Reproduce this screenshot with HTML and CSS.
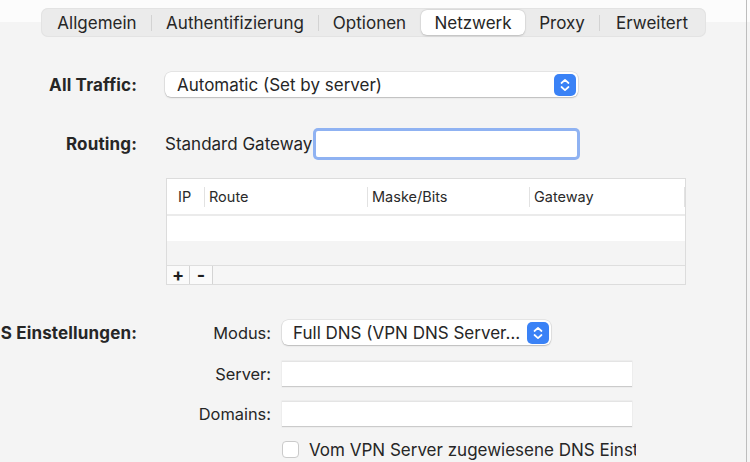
FILE: index.html
```html
<!DOCTYPE html>
<html lang="de">
<head>
<meta charset="utf-8">
<title>Netzwerk</title>
<link rel="stylesheet" href="styles.css">
</head>
<body>
<div class="window">
  <div class="tabbar">
    <div class="tab t1">Allgemein</div>
    <i class="sep"></i>
    <div class="tab t2">Authentifizierung</div>
    <i class="sep"></i>
    <div class="tab t3">Optionen</div>
    <div class="tab t4 active">Netzwerk</div>
    <div class="tab t5">Proxy</div>
    <i class="sep"></i>
    <div class="tab t6">Erweitert</div>
  </div>

  <div class="form">
    <div class="row r-traffic">
      <div class="label">All Traffic:</div>
      <div class="popup w-traffic">
        <span class="popup-text">Automatic (Set by server)</span>
        <span class="stepper"><svg width="22" height="22" viewBox="0 0 22 22"><path d="M7.5 9 L11 5.8 L14.5 9 M7.5 13 L11 16.2 L14.5 13" fill="none" stroke="#fff" stroke-width="1.7" stroke-linecap="round" stroke-linejoin="round"/></svg></span>
      </div>
    </div>

    <div class="row r-routing">
      <div class="label">Routing:</div>
      <span class="plain">Standard Gateway</span>
      <div class="focus-ring"><div class="focus-field"></div></div>
    </div>

    <div class="table">
      <div class="thead">
        <div class="th c-ip">IP</div>
        <div class="th c-route">Route</div>
        <div class="th c-mask">Maske/Bits</div>
        <div class="th c-gw">Gateway</div>
      </div>
      <div class="trow odd"></div>
      <div class="trow even"></div>
      <div class="tfoot">
        <div class="tbtn">+</div>
        <div class="tbtn">-</div>
      </div>
    </div>

    <div class="row r-dns">
      <div class="label">DNS Einstellungen:</div>
      <div class="dns">
        <div class="dns-row d-modus">
          <div class="sublabel">Modus:</div>
          <div class="popup w-modus">
            <span class="popup-text">Full DNS (VPN DNS Server…</span>
            <span class="stepper"><svg width="22" height="22" viewBox="0 0 22 22"><path d="M7.5 9 L11 5.8 L14.5 9 M7.5 13 L11 16.2 L14.5 13" fill="none" stroke="#fff" stroke-width="1.7" stroke-linecap="round" stroke-linejoin="round"/></svg></span>
          </div>
        </div>
        <div class="dns-row d-server">
          <div class="sublabel">Server:</div>
          <div class="field"></div>
        </div>
        <div class="dns-row d-domains">
          <div class="sublabel">Domains:</div>
          <div class="field"></div>
        </div>
        <div class="dns-row d-check">
          <div class="checkbox"></div>
          <div class="check-label">Vom VPN Server zugewiesene DNS Einstellungen verwenden</div>
        </div>
      </div>
    </div>
  </div>
</div>
</body>
</html>
```
FILE: styles.css
```css
html, body {
  margin: 0;
  padding: 0;
}
body {
  width: 750px;
  height: 462px;
  overflow: hidden;
  background: linear-gradient(to bottom, #fcfcfc 0, #fcfcfc 22px, #f4f4f4 22px, #f4f4f4 100%);
  font-family: Inter, "Liberation Sans", Arial, sans-serif;
  color: #242424;
}
.window {
  width: 746px;
  height: 462px;
  border-right: 1px solid #bdbdbd;
  overflow: hidden;
}

/* Tabs */
.tabbar {
  margin: 8px 0 0 41px;
  width: 665px;
  height: 29px;
  box-sizing: border-box;
  padding: 2px;
  display: flex;
  align-items: center;
  background: #ebebeb;
  border-radius: 7px;
  box-shadow: inset 0 0 0 1px #e3e3e3;
}
.tab {
  height: 25px;
  display: flex;
  align-items: center;
  justify-content: center;
  font-size: 17px;
  color: #262626;
  flex: none;
}
.t1 { width: 108px; }
.t2 { width: 166px; }
.t3 { width: 101px; }
.t4 { width: 104px; margin-left: 1px; }
.t5 { width: 74px; }
.t6 { width: 104px; }
.tab.active {
  background: #ffffff;
  border-radius: 6px;
  box-shadow: 0 0.5px 2px rgba(0,0,0,0.18), 0 0 0 0.5px rgba(0,0,0,0.05);
}
.sep {
  width: 1px;
  height: 16px;
  background: #d3d3d3;
  flex: none;
}

/* Form */
.form {
  display: flex;
  flex-direction: column;
}
.row {
  display: flex;
  align-items: center;
}
.label {
  width: 137px;
  flex: none;
  display: flex;
  justify-content: flex-end;
  white-space: nowrap;
  font-weight: 700;
  font-size: 17px;
  letter-spacing: 0.15px;
  color: #262626;
  margin-right: 28px;
}
.r-traffic { margin-top: 35px; height: 25px; }
.r-routing { margin-top: 31px; height: 32px; }
.r-dns { margin-top: 35px; align-items: flex-start; }
.r-dns > .label { height: 25px; align-items: center; }

.popup {
  height: 25px;
  box-sizing: border-box;
  background: #ffffff;
  border-radius: 6px;
  box-shadow: 0 0 0 0.5px rgba(0,0,0,0.12), 0 1px 1.5px rgba(0,0,0,0.18);
  display: flex;
  align-items: center;
  justify-content: space-between;
  padding: 0 2px 0 12px;
  font-size: 17px;
  color: #262626;
}
.w-traffic { width: 413px; }
.w-modus { width: 269px; padding-left: 11px; }
.stepper {
  width: 22px;
  height: 22px;
  border-radius: 5px;
  background: #3a82f6;
  display: flex;
  align-items: center;
  justify-content: center;
}
.stepper svg { display: block; }

.plain {
  font-size: 17px;
  width: 148px;
  flex: none;
  white-space: nowrap;
  overflow: hidden;
}
.focus-ring {
  width: 267px;
  height: 32px;
  box-sizing: border-box;
  border-radius: 5px;
  background: #8fb2f2;
  padding: 3px;
}
.focus-field {
  width: 100%;
  height: 100%;
  background: #ffffff;
  border-radius: 2px;
}

/* Table */
.table {
  margin: 18px 0 0 166px;
  width: 520px;
  height: 107px;
  box-sizing: border-box;
  border: 1px solid #dcdcdc;
  background: #ffffff;
  display: flex;
  flex-direction: column;
}
.thead {
  height: 35px;
  display: flex;
  align-items: center;
  border-bottom: 2px solid #ebebeb;
  flex: none;
}
.th {
  font-size: 14.5px;
  color: #2a2a2a;
  height: 20px;
  line-height: 20px;
  padding-left: 4px;
  box-sizing: border-box;
  flex: none;
}
.c-ip { width: 38px; padding-left: 11px; border-right: 1px solid #e2e2e2; }
.c-route { width: 163px; border-right: 1px solid #e2e2e2; }
.c-mask { width: 162px; border-right: 1px solid #e2e2e2; }
.c-gw { width: 155px; border-right: 1px solid #e2e2e2; }
.trow { flex: none; }
.odd { height: 25px; background: #ffffff; }
.even { height: 24px; background: #f4f4f4; }
.tfoot {
  flex: 1;
  display: flex;
  background: #f6f6f6;
  border-top: 1px solid #dedede;
}
.tbtn {
  width: 22px;
  border-right: 1px solid #d4d4d4;
  display: flex;
  align-items: center;
  justify-content: center;
  font-weight: 700;
  font-size: 18px;
  color: #1e1e1e;
  line-height: 1;
  background: #fafafa;
}

/* DNS */
.dns {
  display: flex;
  flex-direction: column;
}
.dns-row {
  display: flex;
  align-items: center;
}
.sublabel {
  width: 106px;
  margin-right: 11px;
  text-align: right;
  font-size: 16.4px;
  color: #262626;
  flex: none;
}
.d-modus { height: 25px; }
.d-server { height: 26px; margin-top: 16px; }
.d-domains { height: 26px; margin-top: 14px; }
.d-check { height: 17px; margin-top: 14px; padding-left: 117px; }
.field {
  width: 350px;
  height: 26px;
  box-sizing: border-box;
  background: #ffffff;
  border-top: 1px solid #e4e4e4;
  border-bottom: 1px solid #cbcbcb;
  box-shadow: 0 0 0 0.5px #e6e6e6;
}
.checkbox {
  width: 17px;
  height: 17px;
  box-sizing: border-box;
  border: 1px solid #cacaca;
  border-radius: 4px;
  background: #ffffff;
  flex: none;
  margin-right: 10px;
}
.check-label {
  font-size: 17px;
  color: #262626;
  white-space: nowrap;
  overflow: hidden;
  width: 327px;
}
```
